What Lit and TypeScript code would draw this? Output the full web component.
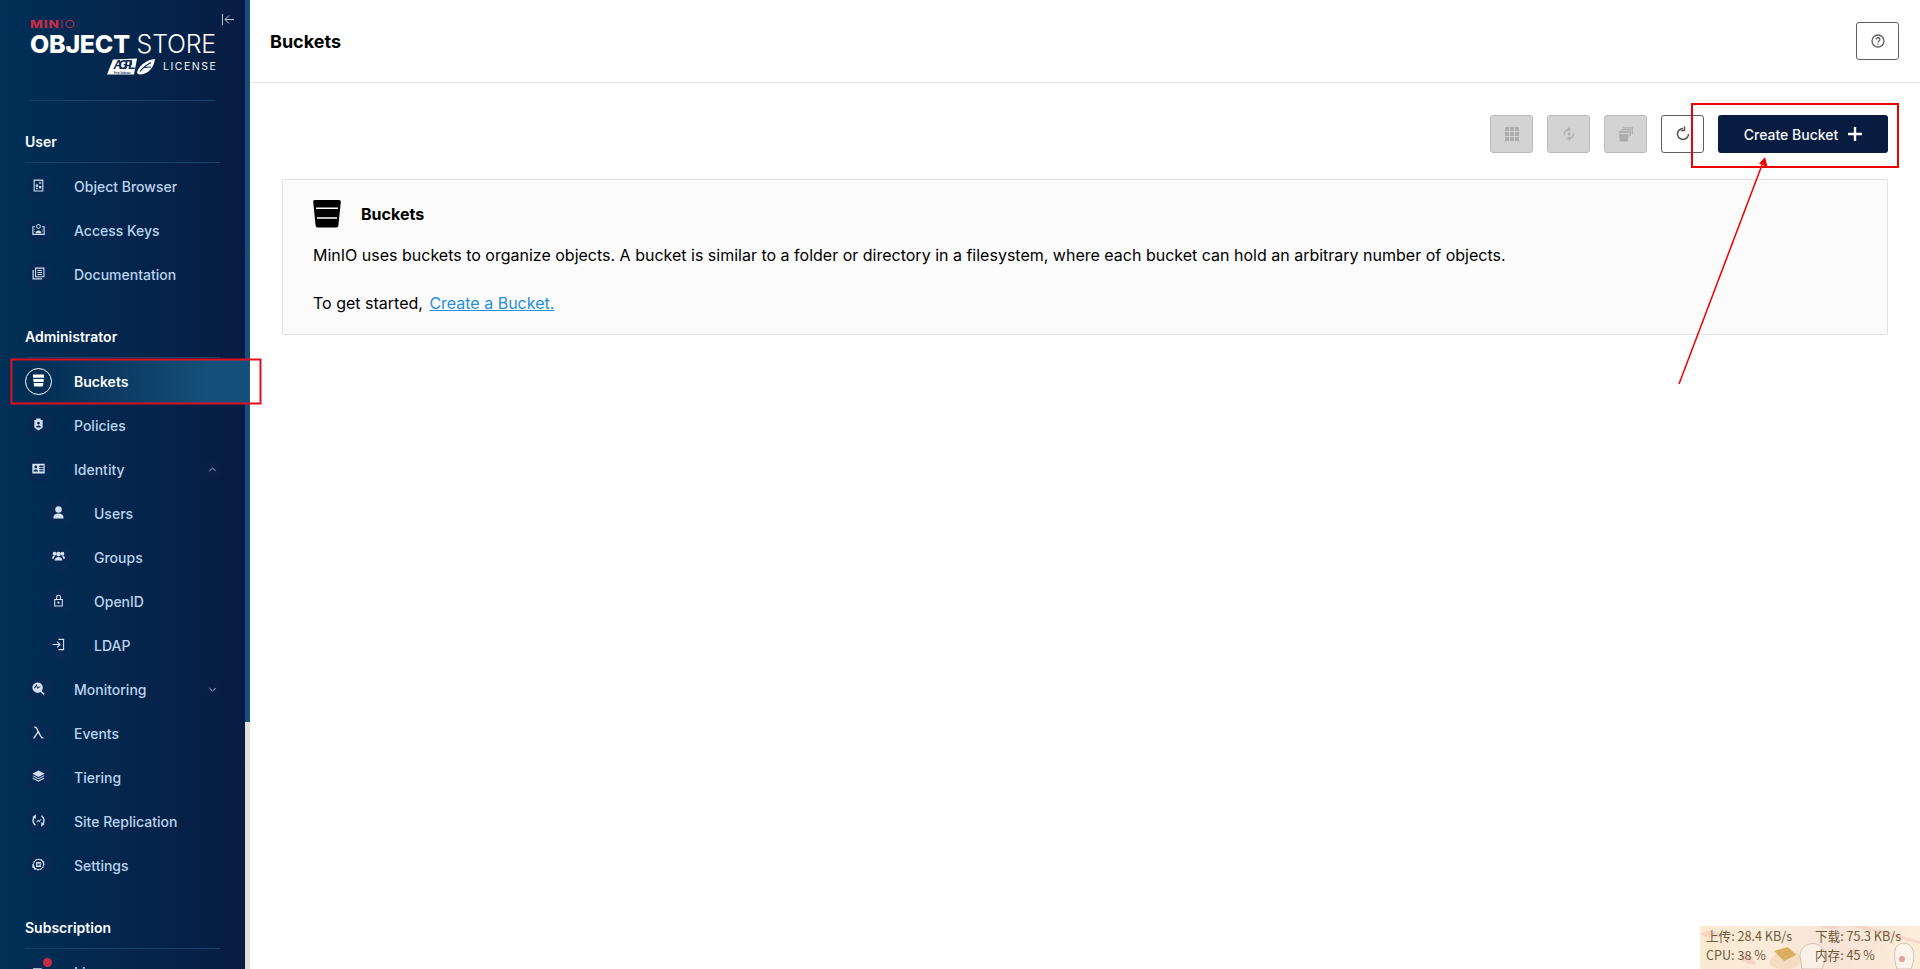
import { LitElement, html, css, svg } from "lit";
import { customElement } from "lit/decorators.js";

const I: Record<string, any> = {
  browser: svg`<path fill-rule="evenodd" d="M1.500.5h9v11h-9zM2.500 1.500v9h7v-9z"/><rect x="3.500" y="5" width="2.200" height="2.200"/><rect x="6.500" y="6.400" width="2.200" height="2.200"/><rect x="3.800" y="8" width="1.500" height="1.500"/><rect x="6.400" y="2.400" width="2.200" height="2.200" opacity=".6"/>`,
  keys: svg`<path fill-rule="evenodd" d="M.3 3h2.400v1H1.300v6h9.400V4H9.300V3h2.400v8H.3z"/><circle cx="6" cy="3.200" r="1.800" fill="none" stroke="currentColor" stroke-width=".9"/><path d="M3.400 9.400c0-3.200 5.200-3.200 5.200 0z"/><path d="M9 6h1v.8H9zM9 7.600h1v.8H9zM2 6h1v.8H2zM2 7.600h1v.8H2z" opacity=".7"/>`,
  docs: svg`<path fill-rule="evenodd" d="M2.800.5h8.700v9H2.800zM3.800 1.500v7h6.700v-7z"/><path d="M.5 2.800h1.100v7.600h7.700v1.100H.5zM5 2.800h4.300v1H5zM5 4.600h4.300v1H5zM5 6.400h4.300v1H5z"/>`,
  bucket: svg`<path d="M.8 1.200c0-.4.3-.7.7-.7h9c.4 0 .7.3.7.7l-.2 2.300H1zM1.100 4.500h9.800l-.3 2.800H1.400zM1.500 8.300h9l-.3 2.600c0 .4-.3.6-.7.6H2.500c-.4 0-.7-.2-.7-.6z"/>`,
  policies: svg`<path fill-rule="evenodd" d="M4 .5h4v1.300h1.800V9L6 11.500 2.200 9V1.800H4zM6 3.400a1.300 1.300 0 100 2.600 1.300 1.300 0 000-2.600zM3.800 8.700h4.400c0-2.300-4.400-2.300-4.400 0z"/>`,
  identity: svg`<path fill-rule="evenodd" d="M.3 1.500h11.400v9H.3zM3.500 3.300a1.300 1.300 0 100 2.600 1.300 1.300 0 000-2.600zM1.400 8.800h4.200c0-2.400-4.200-2.400-4.200 0zM6.800 3.300v1.300h3.800V3.300zM6.800 5.400v1.300h3.800V5.400zM6.800 7.500v1.300h3.800V7.500z"/>`,
  user: svg`<circle cx="6" cy="3.300" r="3"/><path d="M1.300 11.500c0-.8-.2-4.500 4.700-4.500s4.700 3.700 4.700 4.500z"/>`,
  groups: svg`<circle cx="6" cy="3.800" r="2.200"/><circle cx="2.300" cy="3.400" r="1.700"/><circle cx="9.700" cy="3.400" r="1.700"/><path d="M2.400 9.800c0-4.400 7.200-4.400 7.200 0zM0 8c0-2.900 2-3.200 3.100-2.800-.9.700-1.400 1.500-1.400 2.800zM12 8c0-2.900-2-3.200-3.100-2.800.9.700 1.400 1.500 1.400 2.800z"/>`,
  openid: svg`<path fill-rule="evenodd" d="M2 4.500h1.700V3a2.300 2.300 0 014.600 0v1.500H10v7H2zM4.700 4.500h2.600V3a1.300 1.300 0 00-2.600 0zM3 5.500v5h6v-5z"/><circle cx="6" cy="8" r="1"/>`,
  ldap: svg`<path d="M6 .8h5.200v10.400H6v-1h4.200V1.800H6zM.6 5.500h5.600L4.400 3.700l.7-.7 3 3-3 3-.7-.7 1.800-1.800H.6z"/>`,
  monitoring: svg`<path fill-rule="evenodd" d="M5.200.4a4.800 4.800 0 013.700 7.800l2.900 2.700-1 1.100-3-2.800A4.800 4.800 0 115.200.4zM3 5.700l1-1.900 1.200 3 1-1.700h1.500v-.8H5.800l-.5.800L4 1.900 2.500 4.900H1.800v.8z"/>`,
  lambda: svg`<path d="M.8 11.600L5 5.200 3.700 2.300C3.400 1.700 3 1.500 2 1.500V.4c1.700 0 2.500.4 3 1.600L9 10c.3.500.7.600 1.700.600v1c-1.500 0-2.200-.2-2.700-1.200L5.700 6.400 2.300 11.600z"/>`,
  tiering: svg`<path d="M6 .4l5.600 3L6 6.400.4 3.400z"/><path d="M1.300 5L6 7.500 10.700 5l.9.600L6 8.600.4 5.600z"/><path d="M1.300 7.200L6 9.700l4.700-2.500.9.600L6 10.900.4 7.800z"/>`,
  replication: svg`<path fill="none" stroke="currentColor" stroke-width="1.300" d="M3.300 10.400A5.200 5.200 0 012 3M8.700 1.600A5.200 5.200 0 0110 9"/><path d="M3.500.3v4.200L.4 2.800zM8.500 11.700V7.500l3.100 1.700z"/><path d="M4 7.200l1.500-1.900 1.200 1 1.200-1.600.6.500-1.700 2.300-1.200-1-1 1.300z"/>`,
  settings: svg`<path fill-rule="evenodd" d="M6 .3l1.300 1 1.700-.3.800 1.500 1.600.7-.3 1.700L11.700 6l-1.100 1.100.3 1.700-1.600.7-.8 1.500-1.700-.3-1.300 1-1.300-1-1.700.3-.8-1.500-1.600-.7.3-1.700L.3 6l1.100-1.100-.3-1.700 1.600-.7.8-1.500 1.700.3zM6 1.800a4.200 4.200 0 100 8.400 4.200 4.200 0 000-8.400z"/><path fill-rule="evenodd" d="M3.800 3.800h4.400v4.400H3.800zM5 5v2h2V5z"/>`,
  license: svg`<path d="M1 3h8v1H1zM1 6h8v1H1zM1 9h6v1H1z"/>`,
};

type Item = { icon: string; label: string; active?: boolean; sub?: boolean; chev?: "up" | "down"; badge?: boolean };
const sections: { title: string; items: Item[] }[] = [
  { title: "User", items: [
    { icon: "browser", label: "Object Browser" },
    { icon: "keys", label: "Access Keys" },
    { icon: "docs", label: "Documentation" },
  ]},
  { title: "Administrator", items: [
    { icon: "bucket", label: "Buckets", active: true },
    { icon: "policies", label: "Policies" },
    { icon: "identity", label: "Identity", chev: "up" },
    { icon: "user", label: "Users", sub: true },
    { icon: "groups", label: "Groups", sub: true },
    { icon: "openid", label: "OpenID", sub: true },
    { icon: "ldap", label: "LDAP", sub: true },
    { icon: "monitoring", label: "Monitoring", chev: "down" },
    { icon: "lambda", label: "Events" },
    { icon: "tiering", label: "Tiering" },
    { icon: "replication", label: "Site Replication" },
    { icon: "settings", label: "Settings" },
  ]},
  { title: "Subscription", items: [
    { icon: "license", label: "License", badge: true },
  ]},
];

@customElement("app-root")
export class AppRoot extends LitElement {
  static styles = css`
    :host { display: block; height: 969px; overflow: hidden; position: relative; font-family: Inter, "Noto Sans", sans-serif; background: #fff; color: #000; }
    .page { display: flex; height: 969px; }
    .side { width: 250px; flex: none; display: flex; height: 969px; overflow: hidden; }
    .nav { width: 245px; flex: none; background: linear-gradient(90deg, #003057 0%, #081c42 100%); overflow: hidden; }
    .track { width: 5px; background: #e0e0e0; flex: none; }
    .thumb { height: 722px; background: #14507a; }
    .logo { height: 100px; box-sizing: border-box; padding: 14px 0 0 30px; position: relative; color: #fff; }
    .minio { font-size: 10px; line-height: 10px; height: 10px; margin-top: 5px; color: #c72c48; font-weight: 800; letter-spacing: .7px; transform: scaleX(1.36); transform-origin: left; }
    .minio span { font-weight: 300; }
    .os { font-size: 24.9px; line-height: 30px; white-space: nowrap; letter-spacing: -.2px; }
    .os b { font-weight: 800; }
    .os span { font-weight: 300; }
    .lic { display: flex; align-items: center; height: 18px; margin-top: -1px; }
    .agpl { margin-left: 77px; width: 48px; height: 18px; flex: none; }
    .licensetxt { margin: -2px 0 0 8px; font-size: 10.5px; letter-spacing: 1.5px; font-weight: 400; color: #f0f4f8; }
    .collapse { position: absolute; left: 221px; top: 13px; width: 14px; height: 13px; color: #b9c6d6; }
    .rule { height: 1px; margin: 0 30px; background: #14426b; }
    .section { margin-top: 30px; }
    .title { margin: 0 25px 1px; height: 20px; line-height: 20px; padding: 1px 0 10px; border-bottom: 1px solid #14426b; color: #fff; font-size: 14px; font-weight: 600; }
    .item { height: 44px; display: flex; align-items: center; padding-left: 25px; color: #bcd3ee; font-size: 14px; font-weight: 500; }
    .item.sub { padding-left: 45px; }
    .item.active { color: #fff; font-weight: 600; background: linear-gradient(90deg, rgba(20,80,122,0) 10%, #14507a 85%); }
    .circle { position: relative; width: 27px; height: 27px; box-sizing: border-box; border-radius: 50%; background: #062a54; border: 1px solid #0d2c57; display: flex; align-items: center; justify-content: center; flex: none; margin-right: 22px; color: #d4e0f0; }
    .active .circle { background: transparent; border-color: #fff; color: #fff; }
    .circle svg { width: 13px; height: 13px; fill: currentColor; margin-top: -1px; }
    .badge { position: absolute; right: -1px; top: -2px; width: 9px; height: 9px; border-radius: 50%; background: #c72c48; }
    .chev { margin-left: auto; margin-right: 25px; width: 15px; height: 15px; background: #0a1f45; display: flex; align-items: center; justify-content: center; color: #b9c6d6; }
    .chev svg { width: 9px; height: 9px; }
    .main { flex: 1; min-width: 0; }
    .header { height: 82px; border-bottom: 1px solid #e5e5e5; display: flex; align-items: center; justify-content: space-between; padding: 0 21px 0 20px; }
    .header h1 { margin: 0; font-size: 18px; font-weight: 700; }
    .help { width: 43px; height: 38px; }
    .btn { box-sizing: border-box; border: 1px solid #5f5f5f; border-radius: 3px; background: #fff; display: flex; align-items: center; justify-content: center; color: #5f5f5f; padding: 0; }
    .actions { display: flex; justify-content: flex-end; gap: 14px; padding: 32px 32px 0 0; height: 38px; }
    .icn { width: 43px; height: 38px; }
    .icn.off { background: #d3d3d3; border-color: #bbb; color: #adadad; }
    .create { width: 170px; height: 38px; border: 0; border-radius: 3px; background: #081c42; color: #f5f8fc; font: 500 14px Inter, sans-serif; display: flex; align-items: center; justify-content: center; gap: 10px; }
    .card { margin: 26px 32px 0 32px; height: 156px; box-sizing: border-box; border: 1px solid #e2e2e2; border-radius: 2px; background: #fbfbfb; padding: 20px 30px; }
    .cardhead { display: flex; align-items: center; height: 28px; gap: 20px; }
    .cardhead svg { width: 28px; height: 28px; flex: none; }
    .cardhead b { font-size: 16px; font-weight: 700; margin-top: -1px; }
    .card p { margin: 0; font-size: 16px; line-height: 24px; color: #000; white-space: nowrap; }
    .p1 { padding-top: 15px; }
    .p2 { padding-top: 24px; }
    a { color: #2390d8; text-decoration: underline; margin-left: 2px; }
    .overlay { position: absolute; left: 0; top: 0; width: 1920px; height: 969px; pointer-events: none; }
    .widget { position: absolute; left: 1700px; top: 926px; width: 220px; height: 43px; overflow: hidden; background: linear-gradient(100deg, #fbe9d0 0%, #fbecd8 30%, #f8e3d6 60%, #fbeed8 100%); color: #6b5a3c; font: 12.6px/19px "Noto Sans CJK SC", sans-serif; }
    .widget .g { position: absolute; left: 6px; top: 0; display: grid; grid-template-columns: 109px 100px; white-space: nowrap; }
    .widget svg { position: absolute; left: 0; top: 0; width: 220px; height: 43px; }
  `;

  agpl() {
    return html`<svg class="agpl" viewBox="0 0 48 18">
      <path d="M6 1.500L30 .5 27 16.500H0z" fill="#fff"/>
      <text x="6.500" y="11" font-family="Liberation Sans, sans-serif" font-style="italic" font-weight="700" font-size="12" fill="#0a2a52" textLength="22">AGPL</text>
      <text x="7" y="15.500" font-family="Liberation Sans, sans-serif" font-size="3.500" fill="#0a2a52" textLength="17">Free Software</text>
      <path d="M30 14C33 6 40 2 48 1 47 9 42 16 33 16.500 31 16.500 30 15.500 30 14z" fill="#fff"/>
      <path d="M33 13.500C36 9 40 7 44 4.500M37 9.500L44 9" stroke="#0a2a52" stroke-width="1.100" fill="none"/>
    </svg>`;
  }

  row(it: Item) {
    return html`<div class="item ${it.sub ? "sub" : ""} ${it.active ? "active" : ""}">
      <span class="circle"><svg viewBox="0 0 12 12">${I[it.icon]}</svg>${it.badge ? html`<i class="badge"></i>` : ""}</span>
      <span>${it.label}</span>
      ${it.chev ? html`<span class="chev"><svg viewBox="0 0 10 10" fill="none" stroke="currentColor" stroke-width="1"><path d="${it.chev === "up" ? "M1.500 6.800L5 3.300l3.500 3.500" : "M1.500 3.300L5 6.800l3.500-3.500"}"/></svg></span>` : ""}
    </div>`;
  }

  render() {
    return html`
      <div class="page">
        <aside class="side">
          <div class="nav">
            <div class="logo">
              <div class="minio">MIN<span>IO</span></div>
              <div class="os"><b>OBJECT</b> <span>STORE</span></div>
              <div class="lic">${this.agpl()}<span class="licensetxt">LICENSE</span></div>
              <svg class="collapse" viewBox="0 0 14 13" fill="none" stroke="currentColor" stroke-width="1"><path d="M1.500 1v11M13 6.500H4M8 2.500l-4 4 4 4"/></svg>
            </div>
            <div class="rule"></div>
            ${sections.map((s) => html`<div class="section">
              <div class="title">${s.title}</div>
              ${s.items.map((it) => this.row(it))}
            </div>`)}
          </div>
          <div class="track"><div class="thumb"></div></div>
        </aside>
        <main class="main">
          <header class="header">
            <h1>Buckets</h1>
            <button class="btn help"><svg width="14" height="14" viewBox="0 0 14 14" fill="none" stroke="currentColor" stroke-width="1.300"><circle cx="7" cy="7" r="6"/><path d="M5.200 5.500c0-2.400 3.700-2.300 3.700-.1 0 1.500-1.900 1.500-1.900 3"/><path d="M7 9.600v1.100"/></svg></button>
          </header>
          <div class="actions">
            <button class="btn icn off"><svg width="14" height="14" viewBox="0 0 14 14" fill="currentColor">${[0, 5, 10].map((y) => [0, 5, 10].map((x) => svg`<path fill-rule="evenodd" d="M${x} ${y}h4v4h-4z"/>`))}</svg></button>
            <button class="btn icn off"><svg width="14" height="14" viewBox="0 0 14 14" fill="none" stroke="currentColor" stroke-width="1.300"><path d="M2.500 8C2.200 5 4 3 7 2.500M11.500 6c.3 3-1.500 5-4.500 5.500"/><path d="M5.800.8L8 2.400 6 4.200M8.200 13.200L6 11.600 8 9.800"/><circle cx="7" cy="7" r="1.400" fill="currentColor" stroke="none"/></svg></button>
            <button class="btn icn off"><svg width="15" height="15" viewBox="0 0 15 15" fill="currentColor"><path d="M.5 4h10.500l-.2 2H.7zM1 7h9.600l-.8 7.500H1.800zM3 2h10v7h-1.500V3.200H3zM5 .3h10v7h-1.200V1.500H5z"/></svg></button>
            <button class="btn icn"><svg width="16" height="16" viewBox="0 0 16 16" fill="none" stroke="#555" stroke-width="1.500"><path d="M13.500 8A5.500 5.500 0 1 1 8 2.500"/><path d="M9.500.6v3.800H5.700"/></svg></button>
            <button class="create">Create Bucket <svg width="14" height="14" viewBox="0 0 14 14" fill="#fff"><path d="M5.800 0h2.400v5.800H14v2.400H8.200V14H5.800V8.200H0V5.800h5.800z"/></svg></button>
          </div>
          <section class="card">
            <div class="cardhead">
              <svg viewBox="0 0 28 28"><path fill="#000" d="M2 0h24c1.200 0 1.900.7 1.800 1.800L25.400 25.500c-.1 1.200-.9 1.900-2 1.900H4.600c-1.100 0-1.900-.7-2-1.900L.2 1.800C.1.700.8 0 2 0z"/><path fill="#fff" d="M3 7.500h22v1.500H3zM4 17.200h20v1.500H4z"/></svg>
              <b>Buckets</b>
            </div>
            <p class="p1">MinIO uses buckets to organize objects. A bucket is similar to a folder or directory in a filesystem, where each bucket can hold an arbitrary number of objects.</p>
            <p class="p2">To get started, <a href="#">Create a Bucket.</a></p>
          </section>
        </main>
      </div>
      <svg class="overlay" viewBox="0 0 1920 969" fill="none" stroke="#f00000">
        <rect x="11.500" y="359.500" width="249" height="44" stroke-width="2" stroke="#e01020"/>
        <rect x="1692" y="104" width="206" height="63" stroke-width="2"/>
        <path d="M1679 384L1762 165" stroke-width="1.500"/>
        <path d="M1765 157l2.600 10-8.600-3.200z" fill="#f00000" stroke="none"/>
      </svg>
      <div class="widget">
        <svg viewBox="0 0 220 43">
          <path d="M0 8C10 2 18 4 22 10 12 14 6 12 0 8zM150 0l70 18v-3L165 0zM40 30c8-4 14 0 16 8-8 2-14-2-16-8zM150 24c6-3 10 0 12 6-6 2-10-1-12-6zM120 0c6 4 14 4 20 0z" fill="#f4c9bd" opacity=".6"/>
          <path d="M70 35c4-12 26-14 30-4 2 6-4 12-14 12S68 41 70 35z" fill="#f3dcc0"/>
          <path d="M74 25l14-4 8 8-12 6z" fill="#dcae62"/>
          <path d="M100 30c0-10 12-16 20-10 6 5 6 14 2 23h-20z" fill="#faf0e8" stroke="#b9a597" stroke-width=".6"/>
          <path d="M195 24c2-8 14-10 18 0 2 7 0 14-2 19h-14c-2-6-3-13-2-19z" fill="#fdf3ea" stroke="#b9a597" stroke-width=".6"/>
          <circle cx="202" cy="33" r="3" fill="#eaa09a"/>
        </svg>
        <div class="g"><span>上传: 28.4 KB/s</span><span>下载: 75.3 KB/s</span><span>CPU: 38 %</span><span>内存: 45 %</span></div>
      </div>
    `;
  }
}
